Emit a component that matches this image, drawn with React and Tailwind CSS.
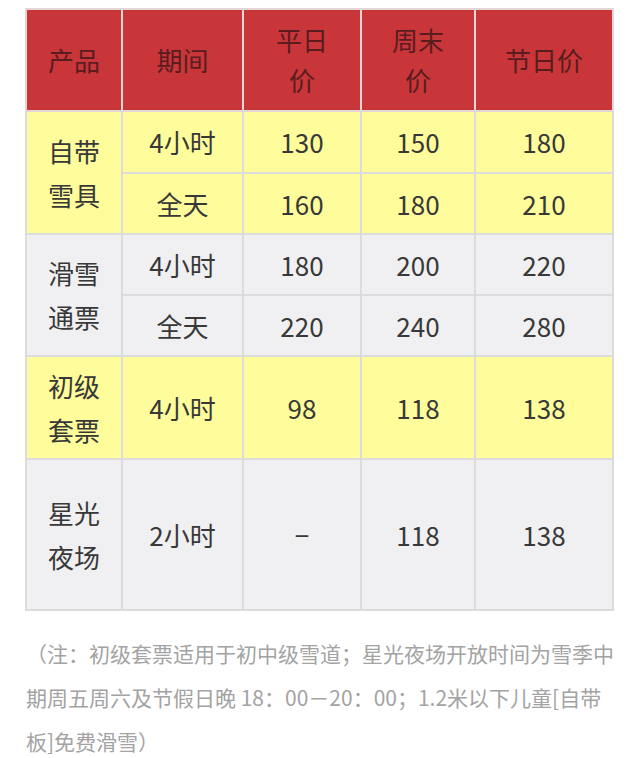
const font = { fontFamily: '"Noto Sans CJK SC", "Noto Sans", sans-serif' };

const rows = [
  { bg: 'bg-[#fffc9b]', name: ['自带', '雪具'], h: 'h-[62px]', span: 2, period: '4小时', p: ['130', '150', '180'] },
  { bg: 'bg-[#fffc9b]', h: 'h-[61px]', period: '全天', p: ['160', '180', '210'] },
  { bg: 'bg-[#f0f0f2]', name: ['滑雪', '通票'], h: 'h-[61px]', span: 2, period: '4小时', p: ['180', '200', '220'] },
  { bg: 'bg-[#f0f0f2]', h: 'h-[61px]', period: '全天', p: ['220', '240', '280'] },
  { bg: 'bg-[#fffc9b]', name: ['初级', '套票'], h: 'h-[103px]', span: 1, period: '4小时', p: ['98', '118', '138'] },
  { bg: 'bg-[#f0f0f2]', name: ['星光', '夜场'], h: 'h-[151px]', span: 1, period: '2小时', p: ['−', '118', '138'] },
];

const cell = 'border-2 border-[#dcdcdc] text-center align-middle p-0';

export default function App() {
  return (
    <div className="w-[640px] h-[758px] bg-white overflow-hidden" style={font}>
      <div className="pt-[8px] pl-[25px]">
        <table className="table-fixed border-collapse w-[589px] text-[26px] leading-[42px] text-[#383838]">
          <colgroup>
            <col className="w-[96px]" />
            <col className="w-[121px]" />
            <col className="w-[118px]" />
            <col className="w-[114px]" />
            <col className="w-[138px]" />
          </colgroup>
          <thead>
            <tr className="h-[102px] bg-[#c8363a] text-[#5a1c1e]">
              <th className={cell + ' font-normal border-[#e2d6d6]'}>产品</th>
              <th className={cell + ' font-normal border-[#e2d6d6]'}>期间</th>
              <th className={cell + ' font-normal border-[#e2d6d6] leading-[40px]'}>平日<br />价</th>
              <th className={cell + ' font-normal border-[#e2d6d6] leading-[40px]'}>周末<br />价</th>
              <th className={cell + ' font-normal border-[#e2d6d6]'}>节日价</th>
            </tr>
          </thead>
          <tbody>
            {rows.map((r, i) => (
              <tr key={i} className={r.h + ' ' + r.bg}>
                {r.name && (
                  <td rowSpan={r.span} className={cell + ' leading-[44px]'}>
                    {r.name[0]}<br />{r.name[1]}
                  </td>
                )}
                <td className={cell}>{r.period}</td>
                {r.p.map((v, j) => (
                  <td key={j} className={cell}>{v}</td>
                ))}
              </tr>
            ))}
          </tbody>
        </table>
      </div>
      <div className="mt-[20px] pl-[26px] text-[21px] leading-[44px] text-[#a3a3a3] whitespace-nowrap">
        <div>（注：初级套票适用于初中级雪道；星光夜场开放时间为雪季中</div>
        <div>期周五周六及节假日晚 18：00－20：00；1.2米以下儿童[自带</div>
        <div>板]免费滑雪）</div>
      </div>
    </div>
  );
}
